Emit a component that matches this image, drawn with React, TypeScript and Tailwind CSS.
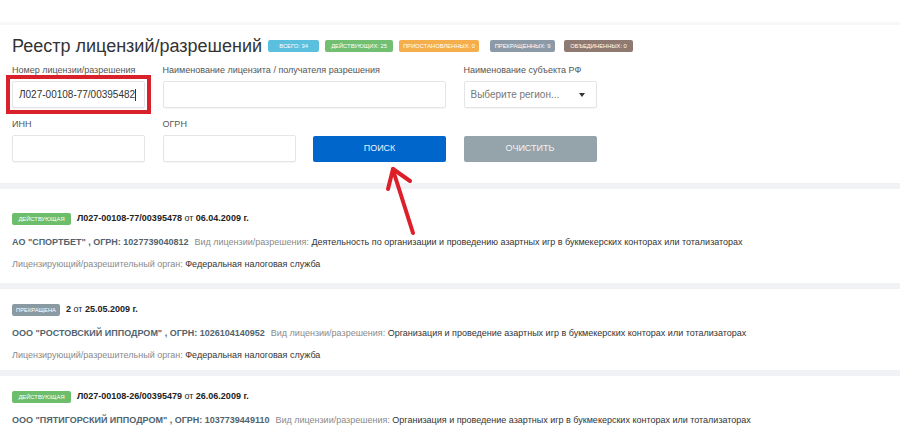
import React from 'react';

const badges = [
  { label: 'Всего: 34', cls: 'bg-[#5bc0de] w-[51px] ml-[6px]' },
  { label: 'Действующих: 25', cls: 'bg-[#72bf72] w-[68px] ml-[6px]' },
  { label: 'Приостановленных: 0', cls: 'bg-[#f4ae4c] w-[80px] ml-[6px]' },
  { label: 'Прекращенных: 9', cls: 'bg-[#8c9aa7] w-[65px] ml-[11px]' },
  { label: 'Объединенных: 0', cls: 'bg-[#8e7a71] w-[69px] ml-[9px]' },
];

type License = {
  status: string;
  statusCls: string;
  number: string;
  date: string;
  org: string;
  ogrn: string;
  kind: string;
  pt: string;
  pb: string;
};

const licenses: License[] = [
  {
    status: 'Действующая',
    statusCls: 'bg-[#6cbd6c] w-[59px]',
    number: 'Л027-00108-77/00395478',
    date: '06.04.2009 г.',
    org: 'АО "СПОРТБЕТ"',
    ogrn: '1027739040812',
    kind: 'Деятельность по организации и проведению азартных игр в букмекерских конторах или тотализаторах',
    pt: 'pt-[24px]',
    pb: 'pb-[13px]',
  },
  {
    status: 'Прекращена',
    statusCls: 'bg-[#8a9aa3] w-[48px]',
    number: '2',
    date: '25.05.2009 г.',
    org: 'ООО "РОСТОВСКИЙ ИППОДРОМ"',
    ogrn: '1026104140952',
    kind: 'Организация и проведение азартных игр в букмекерских конторах или тотализаторах',
    pt: 'pt-[15px]',
    pb: 'pb-[9px]',
  },
  {
    status: 'Действующая',
    statusCls: 'bg-[#6cbd6c] w-[59px]',
    number: 'Л027-00108-26/00395479',
    date: '26.06.2009 г.',
    org: 'ООО "ПЯТИГОРСКИЙ ИППОДРОМ"',
    ogrn: '1037739449110',
    kind: 'Организация и проведение азартных игр в букмекерских конторах или тотализаторах',
    pt: 'pt-[15px]',
    pb: 'pb-[13px]',
  },
];

function Label({ children }: { children: React.ReactNode }) {
  return <div className="h-[12px] leading-[12px] text-[9px] text-[#555] mb-[5px]">{children}</div>;
}

function Field({ className = '', children }: { className?: string; children?: React.ReactNode }) {
  return (
    <div
      className={`h-[27px] rounded-[2px] border border-[#e3e5e8] bg-white shadow-[0_1px_1px_rgba(0,0,0,0.04)] flex items-center px-[6px] text-[10px] ${className}`}
    >
      {children}
    </div>
  );
}

function Arrow() {
  return (
    <svg className="absolute left-0 top-0 pointer-events-none" width="900" height="433">
      <g stroke="#dc1f28" strokeWidth="4" strokeLinecap="round" fill="none">
        <line x1="413" y1="233" x2="393" y2="170" />
        <line x1="393" y1="169" x2="388" y2="189" />
        <line x1="393" y1="169" x2="410" y2="181" />
      </g>
    </svg>
  );
}

export default function App() {
  return (
    <div className="relative w-[900px] h-[433px] overflow-hidden bg-[#f0f2f5] font-['Liberation_Sans',Arial,sans-serif] text-[#333]">
      <div className="h-[22px] bg-white" />
      <div className="h-[3px] bg-[#f6f7f9]" />

      {/* search panel */}
      <div className="bg-white px-3 pt-[9px] pb-[21px]">
        <div className="flex items-center h-[24px]">
          <h1 className="text-[18px] leading-[24px] text-[#333]">Реестр лицензий/разрешений</h1>
          {badges.map((b) => (
            <span
              key={b.label}
              className={`${b.cls} h-[12px] rounded-[2px] text-white text-[5.8px] uppercase flex items-center justify-center whitespace-nowrap`}
            >
              {b.label}
            </span>
          ))}
        </div>

        <div className="grid grid-cols-[133px_133px_133px_133px] gap-x-[17.5px] mt-[6px]">
          <div>
            <Label>Номер лицензии/разрешения</Label>
            <div className="relative">
              <Field className="border-[#b9d3ef] text-[#333]">Л027-00108-77/00395482<span className="w-px h-[12px] bg-[#333]" /></Field>
              <span className="absolute -inset-[6px] border-[4px] border-[#d9212b]" />
            </div>
          </div>
          <div className="col-span-2">
            <Label>Наименование лицензита / получателя разрешения</Label>
            <Field />
          </div>
          <div>
            <Label>Наименование субъекта РФ</Label>
            <Field className="justify-between text-[#777] h-[26px]">
              <span>Выберите регион...</span>
              <span className="w-0 h-0 border-l-[3px] border-r-[3px] border-t-[4px] border-l-transparent border-r-transparent border-t-[#333] mr-[5px]" />
            </Field>
          </div>

          <div className="mt-[10px]">
            <Label>ИНН</Label>
            <Field className="h-[26px]" />
          </div>
          <div className="mt-[10px]">
            <Label>ОГРН</Label>
            <Field className="h-[26px]" />
          </div>
          <div className="mt-[26px]">
            <button className="w-full h-[26px] rounded-[2px] bg-[#0066cc] text-[#e9f1ff] text-[9px] uppercase">Поиск</button>
          </div>
          <div className="mt-[26px]">
            <button className="w-full h-[26px] rounded-[2px] bg-[#95a3ab] text-[#f3f5f6] text-[9px] uppercase">Очистить</button>
          </div>
        </div>
      </div>

      {/* results */}
      <div className="flex flex-col gap-[6px] mt-[6px]">
        {licenses.map((l, i) => (
          <div key={i} className={`bg-white px-3 ${l.pt} ${l.pb}`}>
            <div className="flex items-center h-[12px]">
              <span
                className={`${l.statusCls} h-[12px] rounded-[2px] text-white text-[5.8px] uppercase flex items-center justify-center`}
              >
                {l.status}
              </span>
              <span className="ml-[6px] text-[9px] text-[#222]">
                <b>{l.number}</b> от <b>{l.date}</b>
              </span>
            </div>
            <div className="mt-[11px] h-[12px] leading-[12px] text-[9px] whitespace-nowrap">
              <b className="text-[#52636e]">
                {l.org} , ОГРН: {l.ogrn}
              </b>
              <span className="text-[#8a8a8a] ml-[6px]">Вид лицензии/разрешения:</span>{' '}
              <span className="text-[#333]">{l.kind}</span>
            </div>
            {i < licenses.length - 1 && (
              <div className="mt-[10px] h-[12px] leading-[12px] text-[9px] whitespace-nowrap">
                <span className="text-[#8a8a8a]">Лицензирующий/разрешительный орган:</span>{' '}
                <span className="text-[#333]">Федеральная налоговая служба</span>
              </div>
            )}
          </div>
        ))}
      </div>

      <Arrow />
    </div>
  );
}
